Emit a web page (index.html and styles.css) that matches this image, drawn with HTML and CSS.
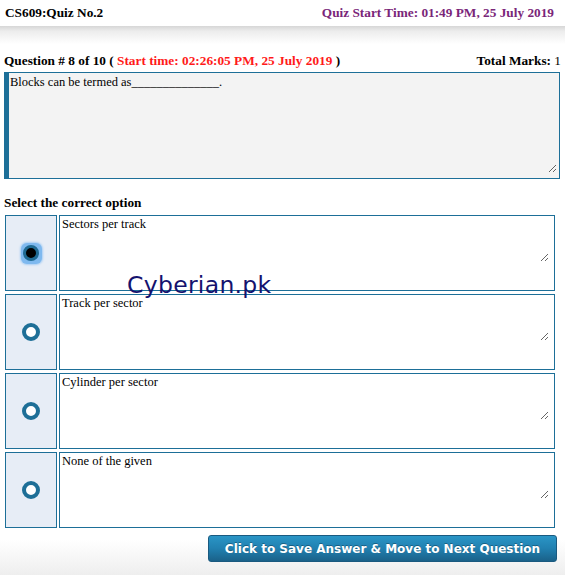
FILE: index.html
```html
<!DOCTYPE html>
<html>
<head>
<meta charset="utf-8">
<link rel="stylesheet" href="styles.css">
</head>
<body>
<div class="page">
  <header class="topbar">
    <div class="course">CS609:Quiz No.2</div>
    <div class="quiz-time">Quiz Start Time: 01:49 PM, 25 July 2019</div>
  </header>
  <div class="topshadow"></div>

  <main class="content">
    <div class="qline">
      <div class="qnum">Question # 8 of 10 ( <span class="start">Start time: 02:26:05 PM, 25 July 2019</span> )</div>
      <div class="marks">Total Marks: <span class="mval">1</span></div>
    </div>
    <div class="question">
      <textarea class="question-text" readonly>Blocks can be termed as______________.</textarea>
    </div>

    <div class="select-label">Select the correct option</div>

    <div class="options">
      <div class="opt">
        <div class="opt-radio"><span class="radio selected"><span class="dot"></span></span></div>
        <div class="opt-cell"><textarea class="opt-text" readonly>Sectors per track</textarea></div>
      </div>
      <div class="opt">
        <div class="opt-radio"><span class="radio"></span></div>
        <div class="opt-cell"><textarea class="opt-text" readonly>Track per sector</textarea></div>
      </div>
      <div class="opt">
        <div class="opt-radio"><span class="radio"></span></div>
        <div class="opt-cell"><textarea class="opt-text" readonly>Cylinder per sector</textarea></div>
      </div>
      <div class="opt">
        <div class="opt-radio"><span class="radio"></span></div>
        <div class="opt-cell"><textarea class="opt-text" readonly>None of the given</textarea></div>
      </div>
      <div class="watermark">Cyberian.pk</div>
    </div>

    <div class="actions">
      <button class="save-btn">Click to Save Answer &amp; Move to Next Question</button>
    </div>
  </main>
</div>
</body>
</html>
```

FILE: styles.css
```css
* { box-sizing: border-box; }
html, body { margin: 0; padding: 0; }
body {
  font-family: "Liberation Serif", "Times New Roman", serif;
  color: #000;
  background: linear-gradient(to bottom, #ffffff 0, #ffffff 540px, #eeeeee 575px);
  min-height: 575px;
}
.page { width: 565px; }
.topbar {
  display: flex;
  justify-content: space-between;
  align-items: center;
  height: 26px;
  padding: 0 11px 0 5px;
  font-weight: bold;
  font-size: 13.3px;
  background: #fff;
}
.course { color: #000; }
.quiz-time { color: #7a2679; }
.topshadow {
  height: 18px;
  background: linear-gradient(to bottom, #d6d6d6 0, #ececec 5px, #ffffff 18px);
}
.content { padding: 0 5px 0 4px; }
.qline {
  display: flex;
  justify-content: space-between;
  font-size: 13.3px;
  font-weight: bold;
  margin-top: 9px;
  line-height: 15px;
}
.start { color: #ff1a1a; }
.mval { font-weight: normal; }
.marks { margin-right: -1px; }
.question {
  width: 556px;
  height: 107px;
  margin-top: 4px;
  background: #f3f3f3;
  border: 1px solid #1d6f98;
  border-left: 5px solid #1d6f98;
  display: flex;
}
.question-text {
  display: block;
  width: 548px;
  height: 100px;
  margin: 0;
  border: none;
  background: transparent;
  font-family: "Liberation Serif", "Times New Roman", serif;
  font-size: 12.5px;
  padding: 2px 1px;
  resize: vertical;
  outline: none;
  color: #000;
}
.select-label {
  font-weight: bold;
  font-size: 13.3px;
  margin-top: 16px;
  line-height: 16px;
}
.options {
  position: relative;
  display: flex;
  flex-direction: column;
  gap: 3px;
  margin-top: 4px;
  padding-left: 1px;
}
.opt {
  display: flex;
  gap: 2px;
  height: 76px;
}
.opt-radio {
  width: 52px;
  flex: none;
  background: #e7edf6;
  border: 1px solid #1d6f98;
  display: flex;
  align-items: center;
  justify-content: center;
}
.opt-cell {
  width: 496px;
  flex: none;
  border: 1px solid #1d6f98;
  background: #fff;
  padding: 0;
}
.opt-text {
  display: block;
  width: 489px;
  height: 46px;
  margin: 0;
  border: none;
  background: transparent;
  font-family: "Liberation Serif", "Times New Roman", serif;
  font-size: 12.5px;
  padding: 1px 2px;
  resize: vertical;
  outline: none;
  color: #000;
}
.radio {
  width: 18px;
  height: 18px;
  border-radius: 50%;
  border: 4px solid #1e6f97;
  background: #fff;
  display: block;
}
.radio.selected {
  width: 21px;
  height: 21px;
  border: none;
  background: #7fb9ef;
  border-radius: 6px;
  box-shadow: 0 0 2px 1px #a9cff4;
  display: flex;
  align-items: center;
  justify-content: center;
}
.radio.selected .dot {
  width: 16px;
  height: 16px;
  border-radius: 50%;
  background: #000;
  border: 3px solid #1f6a93;
  display: block;
}
.watermark {
  position: absolute;
  left: 123px;
  top: 56px;
  font-family: "DejaVu Sans", Verdana, sans-serif;
  font-size: 23.5px;
  color: #15126e;
  letter-spacing: 0.3px;
}
.actions {
  display: flex;
  justify-content: flex-end;
  margin-top: 7px;
  padding-right: 3px;
}
.save-btn {
  width: 349px;
  height: 27px;
  border: 1px solid #1a5a80;
  border-radius: 3px;
  background: linear-gradient(to bottom, #2a95c6 0, #2180b0 50%, #1a6189 100%);
  color: #fff;
  font-family: "DejaVu Sans", Verdana, sans-serif;
  font-weight: bold;
  font-size: 12px;
  text-shadow: 0 -1px 0 rgba(0,0,0,0.3);
  padding: 0;
}
```
